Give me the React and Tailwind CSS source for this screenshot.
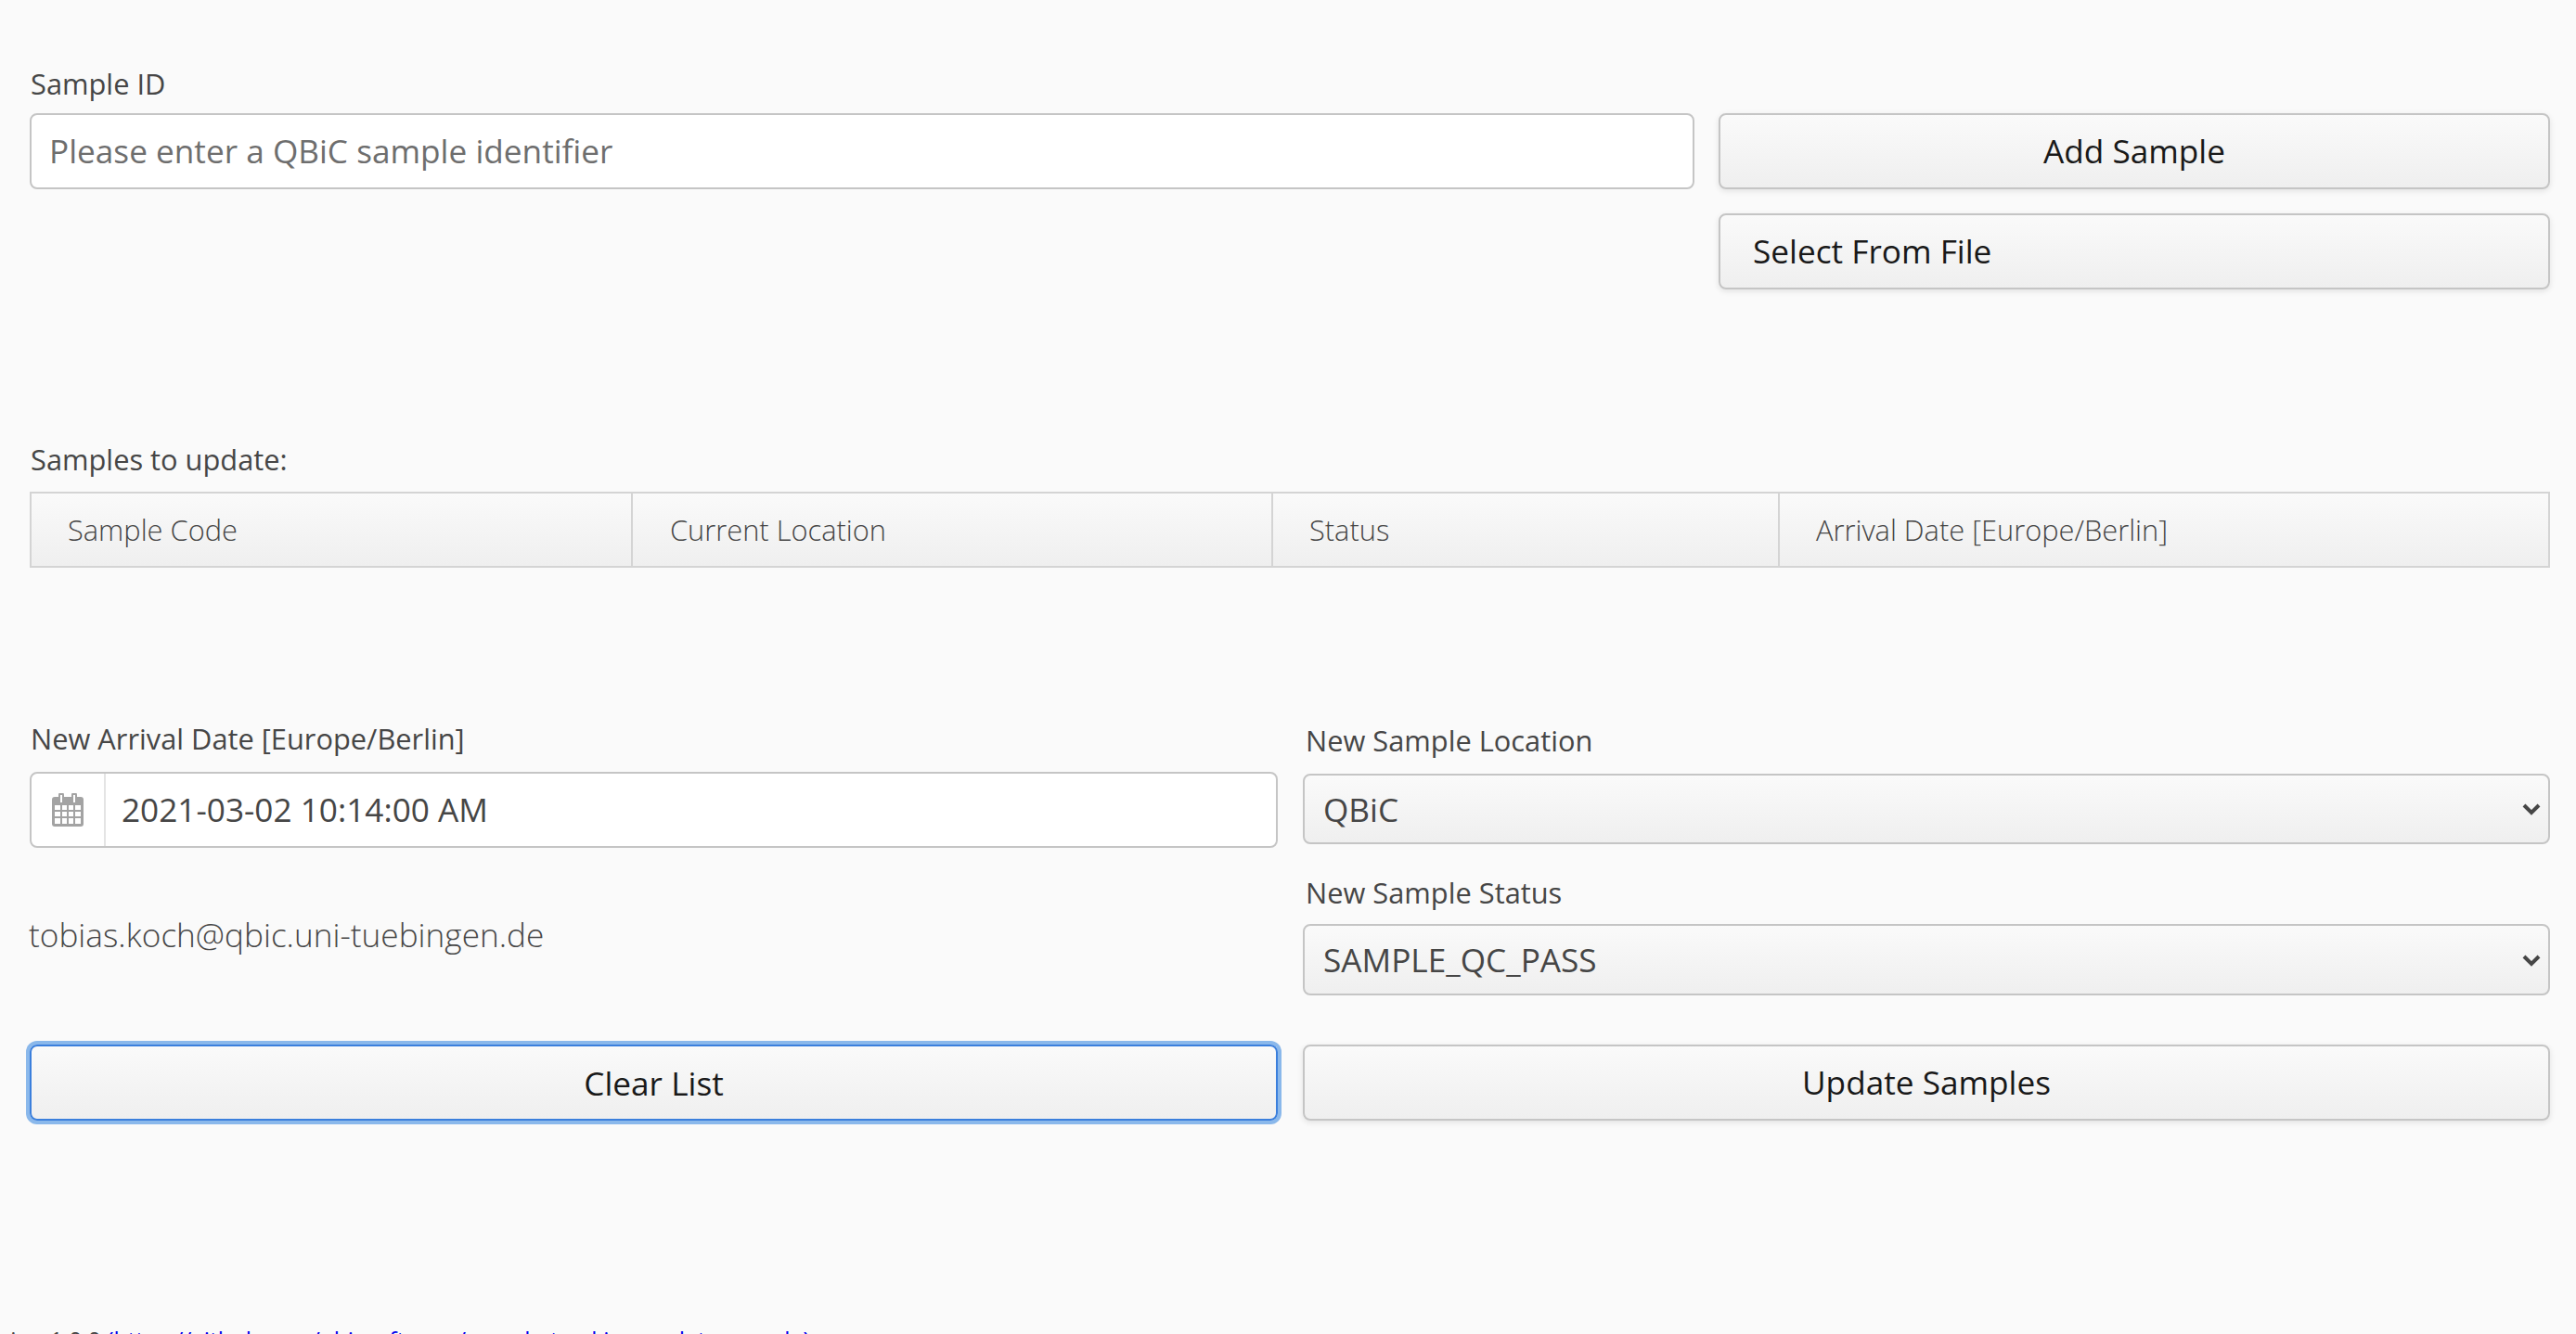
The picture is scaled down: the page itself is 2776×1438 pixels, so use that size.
import React from "react";

const btn = "rounded-[8px] border-2 border-[#c5c5c5] bg-gradient-to-b from-[#fafafa] to-[#efefef] text-[35.2px] leading-none text-[#191919] shadow-[0_2px_6px_rgba(0,0,0,0.1)]";
const sel = "rounded-[8px] border-2 border-[#c5c5c5] bg-gradient-to-b from-[#fafafa] to-[#efefef] text-[35.2px] text-[#464646] flex items-center justify-between pl-[20px] pr-[8px]";
const label = "text-[30.8px] leading-[40px] text-[#464646] whitespace-nowrap";

function Chevron() {
  return (
    <svg width="20" height="14" viewBox="0 0 20 14" className="shrink-0">
      <path d="M2 3 L10 11 L18 3" fill="none" stroke="#464646" strokeWidth="4" />
    </svg>
  );
}

function Calendar() {
  return (
    <svg width="34" height="36" viewBox="0 0 34 36" fill="#a3a3a3">
      <path fillRule="evenodd" d="M3 4h4V2a3 3 0 0 1 6 0v2h8V2a3 3 0 0 1 6 0v2h4a3 3 0 0 1 3 3v26a3 3 0 0 1-3 3H3a3 3 0 0 1-3-3V7a3 3 0 0 1 3-3ZM3 13v5h6v-5Zm8 0v5h5v-5Zm7 0v5h5v-5Zm7 0v5h6v-5ZM3 20v5h6v-5Zm8 0v5h5v-5Zm7 0v5h5v-5Zm7 0v5h6v-5ZM3 27v6h6v-6Zm8 0v6h5v-6Zm7 0v6h5v-6Zm7 0v6h6v-6ZM9 2v8h2V2Zm14 0v8h2V2Z" />
    </svg>
  );
}

export default function App() {
  return (
    <div className="h-[1438px] overflow-hidden bg-[#fafafa] pt-[70px] pr-[28px] pl-[32px] relative" style={{ fontFamily: '"Open Sans", sans-serif' }}>
      <div className={label + " h-[52px] pl-[1px]"}>Sample ID</div>
      <div className="flex gap-[27px] h-[338px]">
        <div className="w-[1794px] h-[82px] rounded-[8px] border-2 border-[#c5c5c5] bg-white flex items-center pl-[19px] pb-[2px] text-[35.2px] text-[#6e6e6e]">
          Please enter a QBiC sample identifier
        </div>
        <div className="flex-1 flex flex-col gap-[26px] -ml-[1px]">
          <button className={btn + " h-[82px]"}>Add Sample</button>
          <button className={btn + " h-[82px] text-left pl-[35px]"}>Select From File</button>
        </div>
      </div>

      <div className={label + " mt-[15px] h-[55px] pl-[1px]"}>Samples to update:</div>
      <div className="flex h-[82px] border-2 border-[#d4d4d4] bg-gradient-to-b from-[#fafafa] to-[#efefef] text-[30.8px] text-[#464646] font-light">
        <div className="w-[648px] flex items-center pl-[39px] pt-[1px] border-r-2 border-[#d4d4d4]">Sample Code</div>
        <div className="w-[690px] flex items-center pl-[40px] pt-[1px] border-r-2 border-[#d4d4d4]">Current Location</div>
        <div className="w-[546px] flex items-center pl-[39px] pt-[1px] border-r-2 border-[#d4d4d4]">Status</div>
        <div className="flex-1 flex items-center pl-[39px] pt-[1px]">Arrival Date [Europe/Berlin]</div>
      </div>

      <div className="mt-[156px] grid grid-cols-[1345px_1344px] gap-x-[27px]">
        <div className="flex flex-col">
          <div className={label + " h-[64px] pt-[8px] pl-[1px]"}>New Arrival Date [Europe/Berlin]</div>
          <div className="h-[82px] rounded-[8px] border-2 border-[#c5c5c5] bg-white flex items-center text-[35.2px] text-[#464646]">
            <div className="w-[80px] h-full border-r-2 border-[#e4e4e4] flex items-center justify-center"><Calendar /></div>
            <div className="pl-[17px] pb-[1px]">2021-03-02 10:14:00 AM</div>
          </div>
          <div className="h-[159px] pt-[27px] flex items-center -ml-[1px] text-[35.2px] font-light text-[#464646]">tobias.koch@qbic.uni-tuebingen.de</div>
        </div>
        <div className="flex flex-col">
          <div className={label + " h-[66px] pl-[3px] pt-[10px]"}>New Sample Location</div>
          <div className={sel + " h-[76px]"}>QBiC<Chevron /></div>
          <div className={label + " h-[86px] pl-[3px] pt-[32px]"}>New Sample Status</div>
          <div className={sel + " h-[77px]"}>SAMPLE_QC_PASS<Chevron /></div>
        </div>
      </div>

      <div className="mt-[53px] grid grid-cols-[1345px_1344px] gap-x-[27px]">
        <button className="h-[82px] rounded-[8px] border-2 border-[#3b7fdc] bg-gradient-to-b from-[#fafafa] to-[#efefef] text-[35.2px] text-[#191919] shadow-[0_0_0_4px_rgba(25,118,219,0.5)]">Clear List</button>
        <button className={btn + " h-[82px]"}>Update Samples</button>
      </div>

      <div className="absolute left-[-39px] top-[1427px] text-[24.6px] whitespace-nowrap text-[#464646]">
        Version 1.0.0 <a className="text-[#0000ee]">(https://github.com/qbicsoftware/sample-tracking-update-sample)</a>
      </div>
    </div>
  );
}
